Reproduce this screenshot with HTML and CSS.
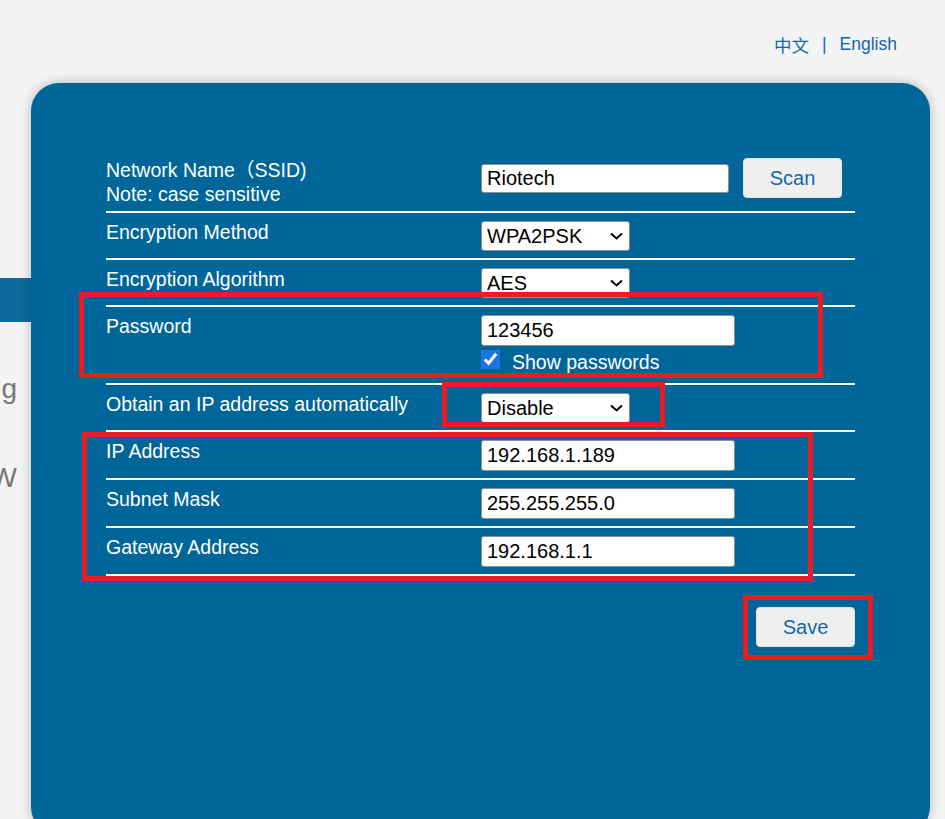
FILE: index.html
```html
<!DOCTYPE html>
<html lang="en">
<head>
  <meta charset="UTF-8">
  <title>Network Settings</title>
  <link rel="stylesheet" href="styles.css">
</head>
<body>
  <div class="topbar">
    <a class="lang" href="#">中文</a>
    <span class="sep">|</span>
    <a class="lang" href="#">English</a>
  </div>

  <div class="layout">
    <nav class="sidebar">
      <div class="menu-item active">Wireless</div>
      <div class="menu-item">Setting</div>
      <div class="menu-item">NEW</div>
    </nav>

    <main class="card">
      <div class="form">
        <div class="row row-first">
          <div class="label">Network Name（SSID)<br>Note: case sensitive</div>
          <div class="control inline">
            <input class="text ssid" type="text" value="Riotech">
            <button class="btn">Scan</button>
          </div>
        </div>

        <div class="row">
          <div class="label">Encryption Method</div>
          <div class="control">
            <span class="select">
              <select><option>WPA2PSK</option></select>
              <svg class="chev" viewBox="0 0 13 8"><path d="M1 1.5 L6.5 6.5 L12 1.5" fill="none" stroke="#000" stroke-width="2"/></svg>
            </span>
          </div>
        </div>

        <div class="row">
          <div class="label">Encryption Algorithm</div>
          <div class="control">
            <span class="select">
              <select><option>AES</option></select>
              <svg class="chev" viewBox="0 0 13 8"><path d="M1 1.5 L6.5 6.5 L12 1.5" fill="none" stroke="#000" stroke-width="2"/></svg>
            </span>
          </div>
        </div>

        <div class="row">
          <div class="label">Password</div>
          <div class="control stack">
            <input class="text" type="text" value="123456">
            <label class="check"><input type="checkbox" checked> <span>Show passwords</span></label>
          </div>
        </div>

        <div class="row">
          <div class="label">Obtain an IP address automatically</div>
          <div class="control">
            <span class="select">
              <select><option>Disable</option></select>
              <svg class="chev" viewBox="0 0 13 8"><path d="M1 1.5 L6.5 6.5 L12 1.5" fill="none" stroke="#000" stroke-width="2"/></svg>
            </span>
          </div>
        </div>

        <div class="row">
          <div class="label">IP Address</div>
          <div class="control"><input class="text" type="text" value="192.168.1.189"></div>
        </div>

        <div class="row">
          <div class="label">Subnet Mask</div>
          <div class="control"><input class="text" type="text" value="255.255.255.0"></div>
        </div>

        <div class="row">
          <div class="label">Gateway Address</div>
          <div class="control"><input class="text" type="text" value="192.168.1.1"></div>
        </div>
      </div>

      <div class="actions">
        <button class="btn">Save</button>
      </div>

      <!-- annotation boxes -->
      <div class="mark mark-password"></div>
      <div class="mark mark-dhcp"></div>
      <div class="mark mark-ip"></div>
      <div class="mark mark-save"></div>
    </main>
  </div>
</body>
</html>
```

FILE: styles.css
```css
body {
  margin: 0;
  background-color: #f4f4f4;
  font-family: 'Liberation Sans', Arial, 'Noto Sans CJK SC', sans-serif;
  overflow: hidden;
}

.topbar {
  height: 83px;
  box-sizing: border-box;
  padding: 6px 48px 0 0;
  display: flex;
  justify-content: flex-end;
  align-items: center;
  font-size: 17.5px;
  color: #1467ad;
}

.lang {
  color: #1467ad;
  text-decoration: none;
}

.sep {
  margin: 0 13px;
}

.layout {
  display: flex;
  align-items: flex-start;
}

.sidebar {
  width: 31px;
  flex-shrink: 0;
  overflow: hidden;
  padding-top: 195px;
  display: flex;
  flex-direction: column;
  align-items: flex-end;
  gap: 45px;
}

.menu-item {
  height: 44px;
  line-height: 44px;
  padding-right: 14px;
  white-space: nowrap;
  font-size: 28px;
  color: #777;
}

.menu-item.active {
  width: 200px;
  background: #0d6a9c;
  color: #fff;
}

.card {
  flex: 1;
  position: relative;
  height: 752px;
  box-sizing: border-box;
  margin-right: 15px;
  padding: 75px 75px 0;
  background: #006699;
  border-radius: 28px;
  box-shadow: 0 0 12px rgba(0, 0, 0, 0.25);
  color: #fff;
}

.row {
  display: grid;
  grid-template-columns: 375px 1fr;
  padding: 8px 0 7px;
  border-bottom: 2px solid #fff;
}

.row-first {
  padding: 0 0 5px;
}

.label {
  font-size: 19.5px;
  line-height: 22px;
}

.row-first .label {
  line-height: 24px;
}

.control {
  display: flex;
  align-items: flex-start;
}

.control.stack {
  flex-direction: column;
}

input.text {
  width: 254px;
  height: 31px;
  box-sizing: border-box;
  margin: 0;
  padding: 0 5px;
  border: 1px solid #8f8f8f;
  border-radius: 3px;
  background: #fff;
  font-family: inherit;
  font-size: 20px;
  color: #000;
}

input.ssid {
  width: 248px;
  height: 29px;
  margin-top: 6px;
}

.btn {
  width: 99px;
  height: 40px;
  margin: 0;
  border: 1px solid #e2e2e2;
  border-radius: 4px;
  background: #efefef;
  font-family: inherit;
  font-size: 20px;
  color: #1466ac;
}

.control.inline .btn {
  margin-left: 14px;
}

.select {
  position: relative;
  display: inline-block;
  width: 149px;
  height: 30px;
}

.select select {
  appearance: none;
  width: 100%;
  height: 100%;
  margin: 0;
  padding: 0 0 0 5px;
  border: 1px solid #8f8f8f;
  border-radius: 3px;
  background: #fff;
  font-family: inherit;
  font-size: 20px;
  color: #000;
}

.chev {
  position: absolute;
  right: 7px;
  top: 11px;
  width: 13px;
  height: 8px;
  pointer-events: none;
}

.check {
  display: flex;
  align-items: flex-start;
  height: 27px;
  margin-top: 3px;
  font-size: 19.5px;
  line-height: 26px;
}

.check input {
  width: 19px;
  height: 19px;
  margin: 1px 12px 0 0;
  accent-color: #1b74e4;
}

.actions {
  display: flex;
  justify-content: flex-end;
  margin-top: 31px;
}

.mark {
  position: absolute;
  box-sizing: border-box;
  border: 5px solid #ec1c24;
}

.mark-password {
  left: 48px;
  top: 209px;
  width: 744px;
  height: 86px;
}

.mark-dhcp {
  left: 411px;
  top: 299px;
  width: 223px;
  height: 45px;
}

.mark-ip {
  left: 51px;
  top: 349px;
  width: 731px;
  height: 149px;
}

.mark-save {
  left: 712px;
  top: 512px;
  width: 130px;
  height: 65px;
}
```
